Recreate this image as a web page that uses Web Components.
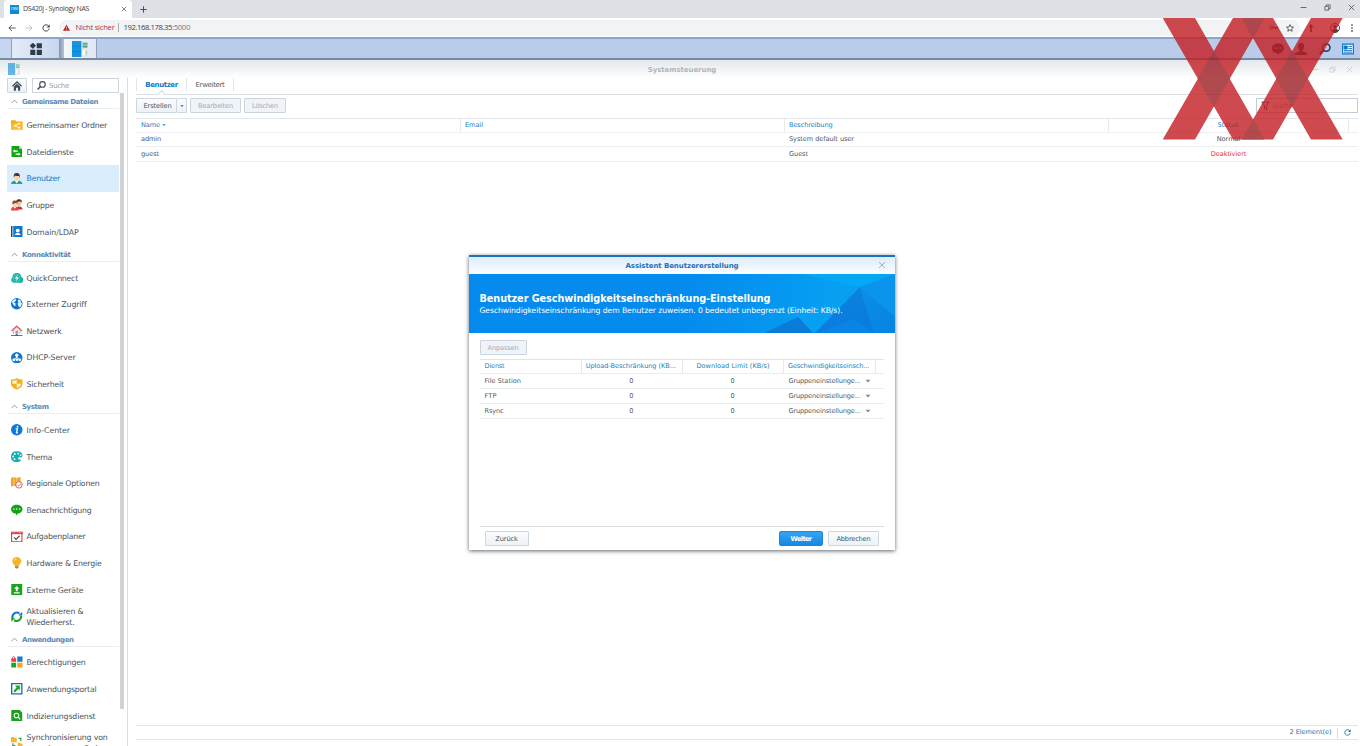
<!DOCTYPE html>
<html lang="de">
<head>
<meta charset="utf-8">
<title>DS420j - Synology NAS</title>
<style>
    html, body { margin: 0; height: 100%; overflow: hidden; background: #fff; }
    body { font-family: "DejaVu Sans", Verdana, sans-serif; font-size: 7px; color: #505a64; }
</style>
</head>
<body>
<nas-desktop></nas-desktop>

<script>
const ICONS = {
    folder: '<path d="M0 1.2h4.5l1 1.3H12V11H0z" fill="#f5a81c"/><path d="M2.8 3.6H12V11H0V6z" fill="#fbbb35"/><path d="M8.4 4.8 4.6 7l3.8 2" fill="none" stroke="#fff" stroke-width=".8"/><circle cx="8.5" cy="4.8" r="1" fill="#fff"/><circle cx="4.5" cy="7" r="1" fill="#fff"/><circle cx="8.5" cy="9" r="1" fill="#fff"/>',
    files: '<path d="M.5 0h8L11.5 3v9H.5z" fill="#14a514"/><path d="m8.5 0 3 3h-3z" fill="#a0dda0"/><path d="M2 5.3 4.2 3.5v1.2h3v1.2h-3v1.2zM10 8.5l-2.2 1.8V9.1h-3V7.9h3V6.7z" fill="#fff"/>',
    user: '<path d="M0 12q0-3.6 4-4h4q4 .4 4 4z" fill="#22a69a"/><path d="M3.8 7.5h4.4L6 11z" fill="#fff"/><ellipse cx="6" cy="4.7" rx="2.7" ry="3.5" fill="#fbd3ad"/><path d="M3 5Q2 0 6 0t3 5L8.3 3Q5.5 3.4 4 2.6z" fill="#443330"/>',
    group: '<ellipse cx="8.2" cy="4.4" rx="2.5" ry="3" fill="#f6c39e"/><path d="M5.5 3.5Q5 0 8.5.2T11.2 4L9.8 2.4z" fill="#5a3329"/><path d="M5 11q0-3 3-3.3 4 0 4 3.3z" fill="#c92e35"/><path d="M0 12q0-3.4 3-3.8h2q3 .4 3 3.8z" fill="#e04444"/><path d="M2.5 8h3L4 10.3z" fill="#fff"/><ellipse cx="4" cy="5.5" rx="2.3" ry="3" fill="#fbd3ad"/><path d="M1.4 5.4Q.8 1.5 4 1.6t2.6 3.8L5.5 4z" fill="#8f4a2e"/>',
    domain: '<path d="M0 0h1.5v12H0z" fill="#124a7c"/><path d="M2.3 0H12v12H2.3z" fill="#1478c8"/><path d="M4 9.500q0-2 2.300-2.300h1.400Q10 7.500 10 9.500z" fill="#fff"/><circle cx="7" cy="4.800" r="2" fill="#fff"/>',
    quick: '<path d="M3 11.3A3 3 0 0 1 1.300 6Q1.500 1 6 1t5 4.500a3 3 0 0 1-1.500 5.800z" fill="#17b2a6"/><path d="m6.800 3-3 3.800H6L5.300 9.600l3-3.800H6.200z" fill="#fff"/><circle cx="6" cy="6.300" r="3.600" fill="none" stroke="#7cdcd3" stroke-width=".5"/>',
    globe: '<circle cx="6" cy="6" r="6" fill="#0d72c8"/><path d="M1 3.500 3 1.500l2.500-.5-.5 2-2 1.500 2 1.500-.8 3-1.700-2L1.300 5zM8 1l2.500 2-.5 1.500 1.500 1-1 3-1.500 1.500L7.500 8 6.800 5.800 8 4.500l-1-1z" fill="#e3f4fd"/>',
    net: '<path d="M2.300 5.500v4h7.400v-4L6 2z" fill="#e9edf1"/><path d="M.6 6.300 6 1.200l5.400 5.100" fill="none" stroke="#e45c5f" stroke-width="1.500"/><path d="M2.600 9.300V6M9.400 9.300V6" stroke="#aab4bd" stroke-width=".8"/><path d="M4.800 6h2.400v3H4.800z" fill="#ea7779"/><path d="M0 11h12M6 9v2" stroke="#3183c5" stroke-width="1.100"/><path d="M4.500 10h3v2h-3z" fill="#1b6fb7"/>',
    dhcp: '<circle cx="6" cy="6" r="6" fill="#1478c8"/><path d="M6 3.500v3M2.800 8.300 6 5.500l3.200 2.800" stroke="#fff" fill="none"/><circle cx="6" cy="3.300" r="1.700" fill="#fff"/><circle cx="2.900" cy="8.200" r="1.500" fill="#fff"/><circle cx="6" cy="8.200" r="1.300" fill="#fff"/><circle cx="9.100" cy="8.200" r="1.500" fill="#fff"/>',
    shield: '<path d="M0 1.300Q4 2 6 0q2 2 6 1.300V6q0 4-6 6-6-2-6-6z" fill="#f3ae18"/><path d="M1.500 2.800Q4 3 6 1.700V6h4.500Q10 9 6 10.400V6H1.500z" fill="#fff4cf"/>',
    info: '<circle cx="6" cy="6" r="6" fill="#0f78d4"/><circle cx="6.800" cy="2.900" r="1" fill="#fff"/><path d="M4.800 5h1.900L5.700 9.300h1.500" fill="none" stroke="#fff" stroke-width="1.300"/>',
    theme: '<path d="M6 .3Q12 .3 12 5q0 2-2.500 1.600T7.500 8.500q4 0 2.500 1.700-1.500 1.500-4 1.500-6 0-6-5.700T6 .3z" fill="#15aeb5"/><g fill="#fff"><circle cx="4" cy="3" r="1"/><circle cx="7.600" cy="2.700" r="1"/><circle cx="2.300" cy="5.800" r="1"/><circle cx="3.700" cy="8.500" r="1"/><circle cx="10" cy="4.500" r=".9"/></g>',
    region: '<path d="m0 1 3-1 3 1 4-1v9L6 10l-3-1-3 1z" fill="#f4a21f"/><path d="M3 0v9M6 1v9" stroke="#fff" stroke-width=".5"/><circle cx="8.300" cy="8.200" r="3.400" fill="#fff" stroke="#d64a4f" stroke-width=".9"/><path d="m6.500 8 1.500 1.500L10.500 7" fill="none" stroke="#d64a4f" stroke-width=".9"/>',
    chat: '<path d="M6 .7c3.500 0 6 2 6 4.600S9.500 10 7 10L5.500 12 5 10C2 10 0 8 0 5.300S2.500.7 6 .7z" fill="#15a315"/><g fill="#fff"><circle cx="3" cy="5.300" r=".8"/><circle cx="6" cy="5.300" r=".8"/><circle cx="9" cy="5.300" r=".8"/></g>',
    task: '<path d="M.6 1.400h10.800v10H.6z" fill="#fff" stroke="#d8474d" stroke-width="1.200"/><path d="M0 1h12v2.300H0z" fill="#d8474d"/><path d="M2 0h1.500v2H2zM8.500 0H10v2H8.500z" fill="#f1aaac"/><path d="m3.300 6.700 2 2L8.900 5" fill="none" stroke="#4c525a" stroke-width="1.300"/>',
    bulb: '<path d="M6 0a4.700 4.700 0 0 1 4.700 4.700Q10.400 6.500 8 9H4Q1.600 6.500 1.300 4.700A4.700 4.700 0 0 1 6 0z" fill="#f8b323"/><path d="M3.500 4q0-2 2-2.500" stroke="#fde09b" fill="none"/><path d="M4.200 9.200h3.600V11l-1 1H5.200l-1-1z" fill="#b58a4a"/>',
    ext: '<path d="M.3 0h11.400v12H.3z" fill="#17a51a"/><path d="m6 2 2.800 3H7v2.500H5V5H3.200zM3 8.500h6v1.300H3z" fill="#fff"/>',
    update: '<path d="M1.600 7.500A4.600 4.600 0 0 1 8.800 2.600" fill="none" stroke="#1478c8" stroke-width="2.200"/><path d="M.2 4.300h4.200L2.300 7.900z" fill="#19a61f" opacity="0"/><path d="M7.700 4.800h4V.8z" fill="#1478c8"/><path d="M10.400 4.800A4.600 4.600 0 0 1 3.200 9.500" fill="none" stroke="#19a61f" stroke-width="2.200"/><path d="M4.300 7.300h-4v4z" fill="#19a61f"/>',
    perm: '<path d="M.3 2.500h5V6h-5z" fill="#e33f45"/><path d="M1.500 3V1.400q1.300-1.600 2.600 0V3" fill="none" stroke="#e33f45"/><path d="M6.500.5H12V6H6.500z" fill="#1879cb"/><path d="M.3 7h5v5h-5z" fill="#20a325"/><path d="M6.500 7H12v5H6.500z" fill="#f4a51d"/>',
    portal: '<path d="M.7.7h10.600v10.600H.7z" fill="#fff" stroke="#1a70b4" stroke-width="1.400"/><path d="M4.200 2.700h5v5L7.700 6.200 4 9.800 2.500 8.300l3.400-3.700z" fill="#18a51d"/>',
    index: '<path d="M.3 0H9l2.700 2.500V12H.3z" fill="#16a219"/><circle cx="5.700" cy="5.700" r="2.400" fill="none" stroke="#fff" stroke-width="1.100"/><path d="m7.500 7.500 2 2.200" stroke="#fff" stroke-width="1.200"/>',
    sync: '<path d="M0 1h3l.7 1H6v4.500H0z" fill="#f7b42c"/><path d="M7 7h2.500l.6 1H12v4H7z" fill="#f7b42c"/><path d="M8 2.500h2.300v2.800M4.500 10H2V7.500" fill="none" stroke="#23a42a" stroke-width="1.200"/>',
    home: '<path d="M.5 6.300 6 1.200l5.500 5.100" fill="none" stroke="#43505e" stroke-width="1.600"/><path d="M2.200 6.600 6 3.200l3.800 3.400v5H7.200V8H4.800v3.600H2.200z" fill="#43505e"/>',
    search: '<circle cx="7.300" cy="4.600" r="3.700" fill="none" stroke="currentColor" stroke-width="1.500"/><path d="M4.600 7.300.8 11.200" stroke="currentColor" stroke-width="2"/>',
    apps: '<path d="M2.800 0 5.700 2.700 2.800 5.500 0 2.700z" fill="#2f3a4a" stroke="#2f3a4a" stroke-width=".7" stroke-linejoin="round"/><path d="M.3 6.800h5V12h-5zM6.700.3h5.200v5H6.700zM6.700 6.800h5.200V12H6.700z" fill="#2f3a4a"/>',
    panel: '<path d="M0 0h7.200v12H0z" fill="#1495e2"/><path d="M0 4h7.200M0 8h7.200" stroke="#0f7cc4" stroke-width=".4"/><path d="M7.200 0H12v12H7.200z" fill="#dfe8ea"/><path d="M8 1.300h3.600V5H8z" fill="#51a88a"/><path d="M8 3h3.600" stroke="#dfe8ea" stroke-width=".5"/><path d="M8 7h2v3.500H8z" fill="#fff"/><path d="M10.600 7.500v3" stroke="#9aa6a8" stroke-width=".6"/>',
    back: '<path d="M11.500 6H1.500M6 1.300 1.300 6 6 10.700" fill="none" stroke="currentColor" stroke-width="1.300"/>',
    reload: '<path d="M10 3.300A4.700 4.700 0 1 0 10.700 7" fill="none" stroke="currentColor" stroke-width="1.500"/><path d="M11.500.6v4.600H6.900z" fill="currentColor"/>',
    warn: '<path d="m6 .8 6 10.700H0z" fill="#b52a2c"/><path d="M6 4.500v3.300M6 8.700V10" stroke="#fff"/>',
    close: '<path d="m1.500 1.500 9 9m0-9-9 9" fill="none" stroke="currentColor" stroke-width="1.300"/>',
    min: '<path d="M1 6h10" stroke="currentColor" stroke-width="1.300"/>',
    restore: '<path d="M1.500 4h6.500v6.500H1.500zM4 4V1.500h6.500V8H8" fill="none" stroke="currentColor" stroke-width="1.200"/>',
    plus: '<path d="M6 .5v11M.5 6h11" stroke="currentColor" stroke-width="1.600"/>',
    up: '<path d="m1 8.800 5-5 5 5" fill="none" stroke="currentColor" stroke-width="1.300"/>',
    down: '<path d="M1 3.500h10L6 9z" fill="currentColor"/>',
    star: '<path d="m6 .9 1.500 3.500 3.800.3-2.900 2.500.9 3.700L6 8.900l-3.300 2 .9-3.700L.7 4.700l3.800-.3z" fill="none" stroke="currentColor" stroke-width="1.200"/>',
    key: '<circle cx="3" cy="6" r="2" fill="none" stroke="currentColor" stroke-width="1.300"/><path d="M5 6h6.500M8.500 6v2.500M11 6v2" stroke="currentColor" stroke-width="1.300" fill="none"/>',
    pin: '<path d="m6 0 4 5H7.300v7H4.700V5H2z" fill="currentColor"/>',
    avatar: '<circle cx="6" cy="6" r="5.400" fill="none" stroke="currentColor" stroke-width="1.200"/><circle cx="6" cy="4.400" r="2.200" fill="currentColor"/><path d="M1.700 9.300Q3 7 6 7t4.300 2.300Q8.500 11.400 6 11.400T1.700 9.300z" fill="currentColor"/>',
    dots: '<g fill="currentColor"><circle cx="6" cy="1.600" r="1.300"/><circle cx="6" cy="6" r="1.300"/><circle cx="6" cy="10.400" r="1.300"/></g>',
    bubble: '<path fill-rule="evenodd" d="M6 .5c3.500 0 6 1.900 6 4.700S9.500 10 7.500 10L5.800 12l-.9-2C2 10 0 8 0 5.200S2.500.5 6 .5zM2.500 4.500v1.300h1.400V4.500zm2.800 0v1.300h1.400V4.500zm2.800 0v1.300h1.400V4.500z" fill="currentColor"/>',
    person: '<path d="M6 0q3 0 3 3.300Q9 6 7.500 7v1.200L12 10v2H0v-2l4.500-1.800V7Q3 6 3 3.300 3 0 6 0z" fill="currentColor"/>',
    widget: '<path d="M.6 1.200h10.800v9.600H.6z" fill="#e9f4fc" stroke="#1479c6" stroke-width="1.200"/><path d="M2 3h3.200v3H2zM6.500 3.500H10M6.500 5.500H10M2 7.500h8M2 9.200h8" fill="#1479c6" stroke="#1479c6" stroke-width=".9"/>',
    funnel: '<path d="M1 1.500h10L7.300 6v5.500L4.700 10V6z" fill="none" stroke="currentColor" stroke-width="1.300"/>',
};

// [label, icon, width] per entry, optionally followed by a second line and its width
const NAV = [
    ["Gemeinsame Dateien", 76, [
        ["Gemeinsamer Ordner", "folder", 80.5], ["Dateidienste", "files", 47], ["Benutzer", "user", 33.5],
        ["Gruppe", "group", 27.5], ["Domain/LDAP", "domain", 52],
    ]],
    ["Konnektivität", 48.5, [
        ["QuickConnect", "quick", 51.5], ["Externer Zugriff", "globe", 60], ["Netzwerk", "net", 35],
        ["DHCP-Server", "dhcp", 49], ["Sicherheit", "shield", 37.5],
    ]],
    ["System", 26.5, [
        ["Info-Center", "info", 43.5], ["Thema", "theme", 25.5], ["Regionale Optionen", "region", 73],
        ["Benachrichtigung", "chat", 65], ["Aufgabenplaner", "task", 59], ["Hardware &amp; Energie", "bulb", 75],
        ["Externe Geräte", "ext", 57], ["Aktualisieren &amp;", "update", 57, "Wiederherst.", 48],
    ]],
    ["Anwendungen", 51.5, [
        ["Berechtigungen", "perm", 59], ["Anwendungsportal", "portal", 70], ["Indizierungsdienst", "index", 69],
        ["Synchronisierung von", "sync", 81, "gemeinsamen Ord...", 78],
    ]],
];

class BaseElement extends HTMLElement {
    constructor() {
        super();
        this.attachShadow({ mode: "open" });
    }
    connectedCallback() {
        this.shadowRoot.innerHTML = this.render();
    }
}

class UiIcon extends BaseElement {
    render() {
        const s = this.getAttribute("s") || 12;
        return `<style>:host { display: block; flex: none; width: ${s}px; height: ${s}px; } svg { display: block; }</style>
            <svg viewBox="0 0 12 12" width="${s}" height="${s}">${ICONS[this.getAttribute("n")]}</svg>`;
    }
}

// Single line label, tracked out to the width given in "w"
class FitText extends BaseElement {
    render() {
        return `<style>
                :host { display: block; flex: none; white-space: nowrap; line-height: 1.2; padding-top: 1.5px; font-size: ${this.getAttribute("s") || 7}px; }
                span { display: block; width: max-content; }
            </style><span><slot></slot></span>`;
    }
    connectedCallback() {
        super.connectedCallback();
        const w = Number(this.getAttribute("w"));
        const span = this.shadowRoot.querySelector("span");
        const natural = span.getBoundingClientRect().width;
        if (w && natural) {
            span.style.letterSpacing = (w - natural) / this.textContent.length + "px";
        }
    }
}

class UiButton extends BaseElement {
    render() {
        return `<style>
                :host { display: flex; box-sizing: border-box; height: 15px; align-items: center; justify-content: center;
                    border: 1px solid #ccd7e2; border-radius: 1px; background: linear-gradient(#fafcfe, #edf2f7); color: #4b5662; }
                :host([disabled]) { color: #a2abb5; border-color: #cbd5df; background: #f0f4f8; }
                :host([primary]) { color: #fff; border-color: #1c85dc; background: linear-gradient(#35a4f5, #1588e4); border-radius: 2px; }
            </style><slot></slot>`;
    }
}

class BrowserBar extends BaseElement {
    render() {
        return `<style>
                :host { display: block; height: 37px; font-family: "Open Sans", "Noto Sans", sans-serif; color: #3f4347; }
                fit-text { padding-top: 0; }
                .strip { height: 18px; background: #dee1e6; display: flex; align-items: center; }
                .tab { box-sizing: border-box; margin-left: 4px; width: 128px; height: 18px; background: #fff; border-radius: 4px 4px 0 0;
                    display: flex; align-items: center; padding: 0 5px 0 6px; }
                .fav { width: 9px; height: 9px; background: #0f88d8; color: #fff; margin-right: 4px; display: flex; align-items: center; justify-content: center; }
                .tab ui-icon { margin-left: auto; }
                .plus { margin-left: 8px; }
                .win { margin-left: auto; display: flex; gap: 17px; padding: 0 5px 3px 0; }
                .bar { height: 19px; background: #fff; display: flex; align-items: center; padding-left: 8px; }
                .bar > ui-icon { margin-right: 9px; }
                .omni { box-sizing: border-box; width: 1241px; height: 16px; border-radius: 8px; background: #f1f3f4; display: flex; align-items: center; padding: 0 6px 0 4px; }
                .red { color: #b8343a; margin-left: 5.5px; }
                .sep { width: 1px; height: 9px; background: #aaaeb3; margin: 0 5px 0 3px; }
                .grey { color: #777c82; }
                .right { margin-left: auto; display: flex; gap: 8px; align-items: center; }
                .ext { display: flex; align-items: center; padding-left: 7px; }
            </style>
            <div class="strip">
                <div class="tab"><div class="fav"><fit-text s="3.5" w="7">DSM</fit-text></div><fit-text s="7" w="66">DS420j - Synology NAS</fit-text><ui-icon n="close" s="6"></ui-icon></div>
                <ui-icon class="plus" n="plus" s="7"></ui-icon>
                <div class="win"><ui-icon n="min" s="7"></ui-icon><ui-icon n="restore" s="7"></ui-icon><ui-icon n="close" s="7"></ui-icon></div>
            </div>
            <div class="bar">
                <ui-icon n="back" s="8"></ui-icon>
                <ui-icon n="back" s="8" style="transform:scaleX(-1);color:#b6b9bd"></ui-icon>
                <ui-icon n="reload" s="8"></ui-icon>
                <div class="omni">
                    <ui-icon n="warn" s="7"></ui-icon>
                    <fit-text class="red" s="7.7" w="39">Nicht sicher</fit-text><span class="sep"></span>
                    <fit-text s="7.7" w="48.5">192.168.178.35</fit-text><fit-text class="grey" s="7.7" w="18">:5000</fit-text>
                    <span class="right"><ui-icon n="key" s="9"></ui-icon><ui-icon n="star" s="8"></ui-icon></span>
                </div>
                <div class="ext"><ui-icon n="pin" s="8"></ui-icon><ui-icon n="avatar" s="10" style="margin:0 8px 0 15px"></ui-icon><ui-icon n="dots" s="8"></ui-icon></div>
            </div>`;
    }
}

class TaskBar extends BaseElement {
    render() {
        return `<style>
                :host { box-sizing: border-box; height: 23px; display: flex; align-items: stretch; background: #b9cdeb;
                    border-top: 2px solid #8fa5c5; border-bottom: 2px solid #7889a3; color: #26384f; }
                .left { width: 12px; background: #c6d6ee; border-right: 1px solid #8fa1bd; box-sizing: border-box; }
                .app { display: flex; align-items: center; justify-content: center; width: 47px; background: linear-gradient(90deg, #e4ecf8, #c9d7ed); }
                .gap { width: 5px; background: linear-gradient(90deg, #8495b0, #b3c3db); }
                .open { width: 32px; background: linear-gradient(90deg, #f5f8fc, #dfe8f6); border-right: 1px solid #8fa1bd; }
                .tray { margin-left: auto; display: flex; align-items: center; gap: 11.5px; padding-right: 6px; }
            </style>
            <div class="left"></div>
            <div class="app"><ui-icon n="apps" s="12"></ui-icon></div><div class="gap"></div>
            <div class="app open"><ui-icon n="panel" s="16"></ui-icon></div>
            <div class="tray"><ui-icon n="bubble" s="12"></ui-icon><ui-icon n="person" s="12"></ui-icon><ui-icon n="search" s="12"></ui-icon><ui-icon n="widget" s="12"></ui-icon></div>`;
    }
}

class NavSection extends BaseElement {
    render() {
        const items = JSON.parse(this.getAttribute("items"));
        return `<style>
                :host { display: block; }
                .head { box-sizing: border-box; height: 19.32px; padding: 1.5px 0 2.3px; }
                .head div { box-sizing: border-box; height: 15.5px; border-bottom: 1px solid #e6edf3; display: flex; align-items: center; gap: 4.5px; padding: 1.5px 0 0 4px;
                    color: #5b8ab5; font-weight: bold; }
                .head ui-icon { color: #6f7d8b; }
                .item { box-sizing: border-box; height: 26.64px; display: flex; align-items: center; gap: 4px; padding-left: 4.5px; color: #4b535c; }
                .item fit-text { line-height: 1.2; }
                .on { background: #d9edfd; color: #1077c5; }
            </style>
            <div class="head"><div><ui-icon n="up" s="7"></ui-icon><fit-text s="7" w="${this.getAttribute("w")}">${this.getAttribute("label")}</fit-text></div></div>
            ${items.map(([label, icon, w, second, w2]) => `<div class="item ${icon === "user" ? "on" : ""}">
                <ui-icon n="${icon}" s="11.5"></ui-icon>
                <div><fit-text s="7.8" w="${w}">${label}</fit-text>${second ? `<fit-text s="7.8" w="${w2}">${second}</fit-text>` : ""}</div>
            </div>`).join("")}`;
    }
}

class SideNav extends BaseElement {
    render() {
        return `<style>
                :host { box-sizing: border-box; width: 128px; flex: none; display: flex; flex-direction: column; border-right: 1px solid #d9dfe5; overflow: hidden; }
                .tools { display: flex; gap: 5px; padding-left: 6.5px; height: 15px; flex: none; }
                .tools ui-button { width: 20.5px; }
                .search { box-sizing: border-box; width: 87px; border: 1px solid #cbd6e0; display: flex; align-items: center; gap: 3px; padding-left: 4px; color: #9ca2a9; }
                .search ui-icon { color: #3f4a56; }
                .body { display: flex; flex: 1; min-height: 0; padding-left: 6.5px; }
                .list { width: 112.5px; height: 660px; margin-top: -.6px; }
                .thumb { width: 4px; height: 616px; margin-left: 1px; background: #d2d2d2; }
            </style>
            <div class="tools"><ui-button><ui-icon n="home" s="10"></ui-icon></ui-button>
                <div class="search"><ui-icon n="search" s="9"></ui-icon><fit-text s="7" w="20">Suche</fit-text></div></div>
            <div class="body"><div class="list">
                ${NAV.map(([label, w, items]) => `<nav-section label="${label}" w="${w}" items='${JSON.stringify(items).replace(/&amp;/g, "&amp;amp;")}'></nav-section>`).join("")}
            </div><div class="thumb"></div></div>`;
    }
}

class UserPanel extends BaseElement {
    render() {
        return `<style>
                :host { flex: 1; min-width: 0; display: flex; flex-direction: column; padding: 0 2.5px 6px 8px; }
                .tabs { box-sizing: border-box; height: 16.5px; display: flex; border-bottom: 1px solid #dde1e4; flex: none; }
                .tabs div { box-sizing: border-box; height: 13px; display: flex; align-items: center; justify-content: center; border-right: 1px solid #e3e6e8; }
                .tabs .on { width: 51px; border-left: 1px solid #e3e6e8; color: #0e7bc4; font-weight: bold; position: relative; }
                .tabs .on::after { content: ""; position: absolute; left: 22px; top: 13px; width: 4px; height: 4px; background: #fff; border: solid #d6dbdf; border-width: 1px 0 0 1px; transform: rotate(45deg); }
                .tools { display: flex; margin-top: 3.5px; height: 15px; flex: none; }
                .arrow { width: 10px; border-left: 0; margin-right: 3px; }
                .find { box-sizing: border-box; margin-left: auto; width: 102px; border: 1px solid #c4cdd6; display: flex; align-items: center; gap: 3px; padding-left: 4px; color: #a9aeb4; }
                .row { box-sizing: border-box; height: 14.7px; display: grid; grid-template-columns: 325px 324px 324px 240px 1fr; border-bottom: 1px solid #eceff1; align-items: center; flex: none; }
                .row > div { padding-left: 5px; display: flex; align-items: center; gap: 2px; }
                .row > .c { padding: 0 1px 0 0; justify-content: center; }
                .head { margin-top: 4.5px; border-top: 1px solid #e2e7ea; height: 15.2px; color: #1e80bd; }
                .head > div { box-sizing: border-box; height: 100%; border-right: 1px solid #e6eaed; }
                .red { color: #e0343d; }
                .foot { box-sizing: border-box; margin-top: auto; height: 15px; border: solid #dfe5e9; border-width: 1px 0; display: flex; align-items: center; justify-content: flex-end; color: #1878b4; padding-right: 7px; }
                .foot i { width: 1px; height: 10px; background: #d3dbe1; margin: 0 6px 0 5px; }
            </style>
            <div class="tabs"><div class="on"><fit-text s="7" w="32.5">Benutzer</fit-text></div><div style="width:47px"><fit-text s="7" w="29">Erweitert</fit-text></div></div>
            <div class="tools">
                <ui-button style="width:41px;padding-left:2px"><fit-text s="6.7" w="28">Erstellen</fit-text></ui-button><ui-button class="arrow"><ui-icon n="down" s="4"></ui-icon></ui-button>
                <ui-button disabled style="width:51px;margin-right:3px"><fit-text s="6.7" w="35">Bearbeiten</fit-text></ui-button>
                <ui-button disabled style="width:42px"><fit-text s="6.7" w="26">Löschen</fit-text></ui-button>
                <div class="find"><ui-icon n="funnel" s="9" style="color:#3f4a56"></ui-icon><fit-text s="7" w="20">Suche</fit-text></div>
            </div>
            <div class="row head"><div><fit-text s="6.6" w="19">Name</fit-text><ui-icon n="down" s="4"></ui-icon></div><div style="padding-left:4px"><fit-text s="6.6" w="18">Email</fit-text></div>
                <div style="padding-left:4px"><fit-text s="6.6" w="43.5">Beschreibung</fit-text></div><div class="c"><fit-text s="6.6" w="21">Status</fit-text></div></div>
            <div class="row"><div><fit-text s="6.6" w="20">admin</fit-text></div><div></div><div style="padding-left:4px"><fit-text s="6.6" w="65">System default user</fit-text></div><div class="c"><fit-text s="6.6" w="23.5">Normal</fit-text></div></div>
            <div class="row"><div><fit-text s="6.6" w="18">guest</fit-text></div><div></div><div style="padding-left:4px"><fit-text s="6.6" w="19">Guest</fit-text></div><div class="c red"><fit-text s="6.6" w="35.5">Deaktiviert</fit-text></div></div>
            <div class="foot"><fit-text s="6.6" w="42">2 Element(e)</fit-text><i></i><ui-icon n="reload" s="7"></ui-icon></div>`;
    }
}

class WizardDialog extends BaseElement {
    render() {
        const rows = [["File Station", 36.5], ["FTP", 12], ["Rsync", 19]];
        return `<style>
                :host { position: absolute; left: 469px; top: 254.5px; box-sizing: border-box; width: 426px; height: 295.5px; background: #fff; border-top: 2.5px solid #1c73bd;
                    box-shadow: 0 1px 4px rgba(40, 50, 60, .75); display: flex; flex-direction: column; }
                .title { height: 17.5px; flex: none; background: linear-gradient(#deecfa, #fbfdff); display: grid; grid-template-columns: 1fr auto 1fr; align-items: center; color: #1b70b8; font-weight: bold; }
                .title ui-icon { grid-column: 3; justify-self: end; margin-right: 9px; color: #9aa3ab; }
                .title fit-text { grid-column: 2; }
                .banner { box-sizing: border-box; height: 59px; flex: none; position: relative; background: #058aee; color: #fff; padding: 17.5px 0 0 10.5px; overflow: hidden; }
                .banner svg { position: absolute; right: 0; top: 0; }
                .banner fit-text { position: relative; }
                .body { padding: 7px 11px 0 10.5px; flex: 1; display: flex; flex-direction: column; }
                .row { box-sizing: border-box; height: 15px; display: grid; grid-template-columns: 102px 101.5px 101px 92px 1fr; border-bottom: 1px solid #e9edf0; align-items: center; }
                .row > div { box-sizing: border-box; padding-left: 5px; display: flex; align-items: center; height: 100%; gap: 4px; }
                .row > .c { padding: 0 2px 0 0; justify-content: center; }
                .head { margin-top: 4px; border-top: 1px solid #dfe4e8; color: #2383bd; }
                .head > div { border-right: 1px solid #e6eaed; }
                .head > div:last-child { border: 0; }
                .foot { margin-top: auto; height: 24px; border-top: 1px solid #d8dde1; display: flex; align-items: flex-start; padding: 4px 5px 0 5px; box-sizing: border-box; }
                ui-icon.dd { color: #858d95; }
            </style>
            <div class="title"><fit-text s="7" w="113">Assistent Benutzererstellung</fit-text><ui-icon n="close" s="8"></ui-icon></div>
            <div class="banner">
                <svg width="215" height="60" viewBox="0 0 215 60">
                    <defs>
                        <linearGradient id="a"><stop offset="0" stop-color="#058aee"/><stop offset=".75" stop-color="#06a0f2"/><stop offset="1" stop-color="#079cf0"/></linearGradient>
                        <linearGradient id="b" x2=".3" y2="1"><stop offset="0" stop-color="#0b84dc"/><stop offset="1" stop-color="#0a7be0"/></linearGradient>
                        <linearGradient id="c" x2="1" y2="1"><stop offset="0" stop-color="#0a8fe6"/><stop offset="1" stop-color="#0683e2"/></linearGradient>
                    </defs>
                    <path d="M0 0h215v60H0z" fill="url(#a)"/>
                    <path d="M122 0h93L180 13z" fill="#05a8f4"/>
                    <path d="m180 13 35-13v60h-21z" fill="#0a94ec"/>
                    <path d="M180 13 112 40 134 60z" fill="#07a0f1"/>
                    <path d="m180 13-46 47h61z" fill="url(#b)"/>
                    <path d="m180 13 35 30v17h-21z" fill="url(#c)"/>
                    <path d="m134 60 40-15 21 15z" fill="#0a8ae6" opacity=".6"/>
                    <path d="M82 60l36-17 16 17z" fill="#0a7bd8"/>
                </svg>
                <fit-text s="9.7" w="291" style="font-weight:bold">Benutzer Geschwindigkeitseinschränkung-Einstellung</fit-text>
                <fit-text s="7.7" w="363" style="margin-top:-.5px">Geschwindigkeitseinschränkung dem Benutzer zuweisen. 0 bedeutet unbegrenzt (Einheit: KB/s).</fit-text>
            </div>
            <div class="body">
                <ui-button disabled style="width:47px"><fit-text s="6.7" w="31">Anpassen</fit-text></ui-button>
                <div class="row head"><div><fit-text s="6.6" w="20">Dienst</fit-text></div><div class="c"><fit-text s="6.6" w="90">Upload-Beschränkung (KB...</fit-text></div>
                    <div class="c" style="padding:0"><fit-text s="6.6" w="73">Download Limit (KB/s)</fit-text></div><div style="padding-left:4px"><fit-text s="6.6" w="81">Geschwindigkeitseinsch...</fit-text></div><div></div></div>
                ${rows.map(([name, w]) => `<div class="row"><div><fit-text s="6.6" w="${w}">${name}</fit-text></div><div class="c"><fit-text s="6.6">0</fit-text></div>
                    <div class="c"><fit-text s="6.6">0</fit-text></div><div style="padding-left:4.5px"><fit-text s="6.6" w="72">Gruppeneinstellunge...</fit-text><ui-icon class="dd" n="down" s="6"></ui-icon></div><div></div></div>`).join("")}
                <div class="foot">
                    <ui-button style="width:44px"><fit-text s="6.7" w="22.5">Zurück</fit-text></ui-button>
                    <ui-button primary style="width:44px;margin:0 5px 0 auto"><fit-text s="6.7" w="21" style="font-weight:bold">Weiter</fit-text></ui-button>
                    <ui-button style="width:51px"><fit-text s="6.7" w="34">Abbrechen</fit-text></ui-button>
                </div>
            </div>`;
    }
}

class XxMark extends BaseElement {
    render() {
        return `<style>:host { position: absolute; left: 1162px; top: 18px; width: 182px; height: 122px; opacity: .8; } svg { display: block; }</style>
            <svg width="182" height="122" viewBox="1162 18 182 122">
                <path fill="#c41d23" d="M1162.7 18H1195L1264.5 139.6H1233zM1233 18h31.5L1195 139.6h-32.3zM1241.5 18H1273l69.7 121.6H1311zM1311 18h31.7L1273 139.6h-31.5z"/>
                <path fill="#9e1d24" d="M1213.7 50.7 1230 78.8l-16.3 28L1197.7 78.8zM1292 50.7l15.8 28.1-15.8 28-16-28zM1241.5 18h23l-11.5 20.2zM1253 119.3l11.5 20.3h-23z"/>
            </svg>`;
    }
}

class NasDesktop extends BaseElement {
    render() {
        return `<style>
                :host { display: flex; flex-direction: column; width: 1360px; height: 746px; position: relative; overflow: hidden; }
                .title { height: 18px; flex: none; background: linear-gradient(#e2e8ec, #fff); display: grid; grid-template-columns: 1fr auto 1fr; align-items: center; color: #b0b5b9; }
                .title fit-text { font-weight: bold; transform: translateX(2px); }
                .ctl { justify-self: end; display: flex; gap: 10px; padding-right: 7px; color: #c4c9ce; }
                .main { display: flex; flex: 1; min-height: 0; }
            </style>
            <browser-bar></browser-bar>
            <task-bar></task-bar>
            <div class="title"><ui-icon n="panel" s="12" style="margin-left:8px;opacity:.65"></ui-icon><fit-text s="7" w="68.5">Systemsteuerung</fit-text>
                <div class="ctl"><ui-icon n="min" s="7"></ui-icon><ui-icon n="restore" s="7"></ui-icon><ui-icon n="close" s="7"></ui-icon></div></div>
            <div class="main"><side-nav></side-nav><user-panel></user-panel></div>
            <wizard-dialog></wizard-dialog>
            <xx-mark></xx-mark>`;
    }
}

customElements.define("ui-icon", UiIcon);
customElements.define("ui-button", UiButton);
customElements.define("fit-text", FitText);
customElements.define("nav-section", NavSection);
customElements.define("side-nav", SideNav);
customElements.define("browser-bar", BrowserBar);
customElements.define("task-bar", TaskBar);
customElements.define("user-panel", UserPanel);
customElements.define("wizard-dialog", WizardDialog);
customElements.define("xx-mark", XxMark);
customElements.define("nas-desktop", NasDesktop);
</script>
</body>
</html>
